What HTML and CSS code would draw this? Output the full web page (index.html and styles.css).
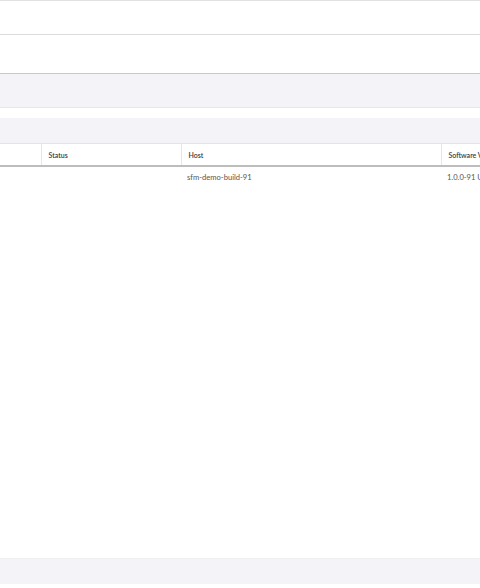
FILE: index.html
```html
<!DOCTYPE html>
<html>
<head>
<meta charset="utf-8">
<link rel="stylesheet" href="styles.css">
</head>
<body>
<div class="page">
  <header class="topbar"></header>
  <div class="subbar"></div>
  <div class="toolbar"></div>
  <div class="spacer"></div>
  <div class="filterbar"></div>
  <table class="grid">
    <colgroup>
      <col class="c1"><col class="c2"><col class="c3"><col class="c4">
    </colgroup>
    <thead>
      <tr><th></th><th>Status</th><th>Host</th><th>Software Version</th></tr>
    </thead>
    <tbody>
      <tr><td></td><td></td><td>sfm-demo-build-91</td><td>1.0.0-91 Update</td></tr>
    </tbody>
  </table>
  <div class="fill"></div>
  <footer class="footer"></footer>
</div>
</body>
</html>
```
FILE: styles.css
```css
html, body { margin: 0; padding: 0; background: #fff; }
body { font-family: Lato, "Open Sans", "Liberation Sans", sans-serif; overflow: hidden; }
.page { width: 480px; height: 588px; display: flex; flex-direction: column; overflow: hidden; }
.topbar { box-sizing: border-box; height: 35px; flex: none; border-top: 1px solid #e2e2e2; border-bottom: 1px solid #dcdcdc; }
.subbar { height: 38px; flex: none; border-bottom: 1px solid #c8c8c8; }
.toolbar { height: 33px; flex: none; background: #f4f4f8; border-bottom: 1px solid #e6e6ec; }
.spacer { height: 10px; flex: none; }
.filterbar { height: 25px; flex: none; background: #f4f4f8; border-bottom: 1px solid #e4e4e8; }
.grid { border-collapse: collapse; table-layout: fixed; width: 520px; flex: none; }
.c1 { width: 41px; } .c2 { width: 140px; } .c3 { width: 260px; } .c4 { width: 79px; }
.grid th { height: 21px; padding: 0 7px; text-align: left; font-size: 7px; font-weight: 600; color: #3a3a3a; border-left: 1px solid #e6e6e6; border-bottom: 2px solid #bdbdbd; white-space: nowrap; overflow: hidden; }
.grid th:first-child { border-left: none; }
.grid td { height: 20px; padding: 0 6px; font-size: 7.6px; color: #555; white-space: nowrap; overflow: hidden; vertical-align: middle; }
.fill { flex: 1; }
.footer { height: 25px; flex: none; background: #f4f4f8; border-top: 1px solid #f0f0f2; margin-bottom: 4px; }
```
